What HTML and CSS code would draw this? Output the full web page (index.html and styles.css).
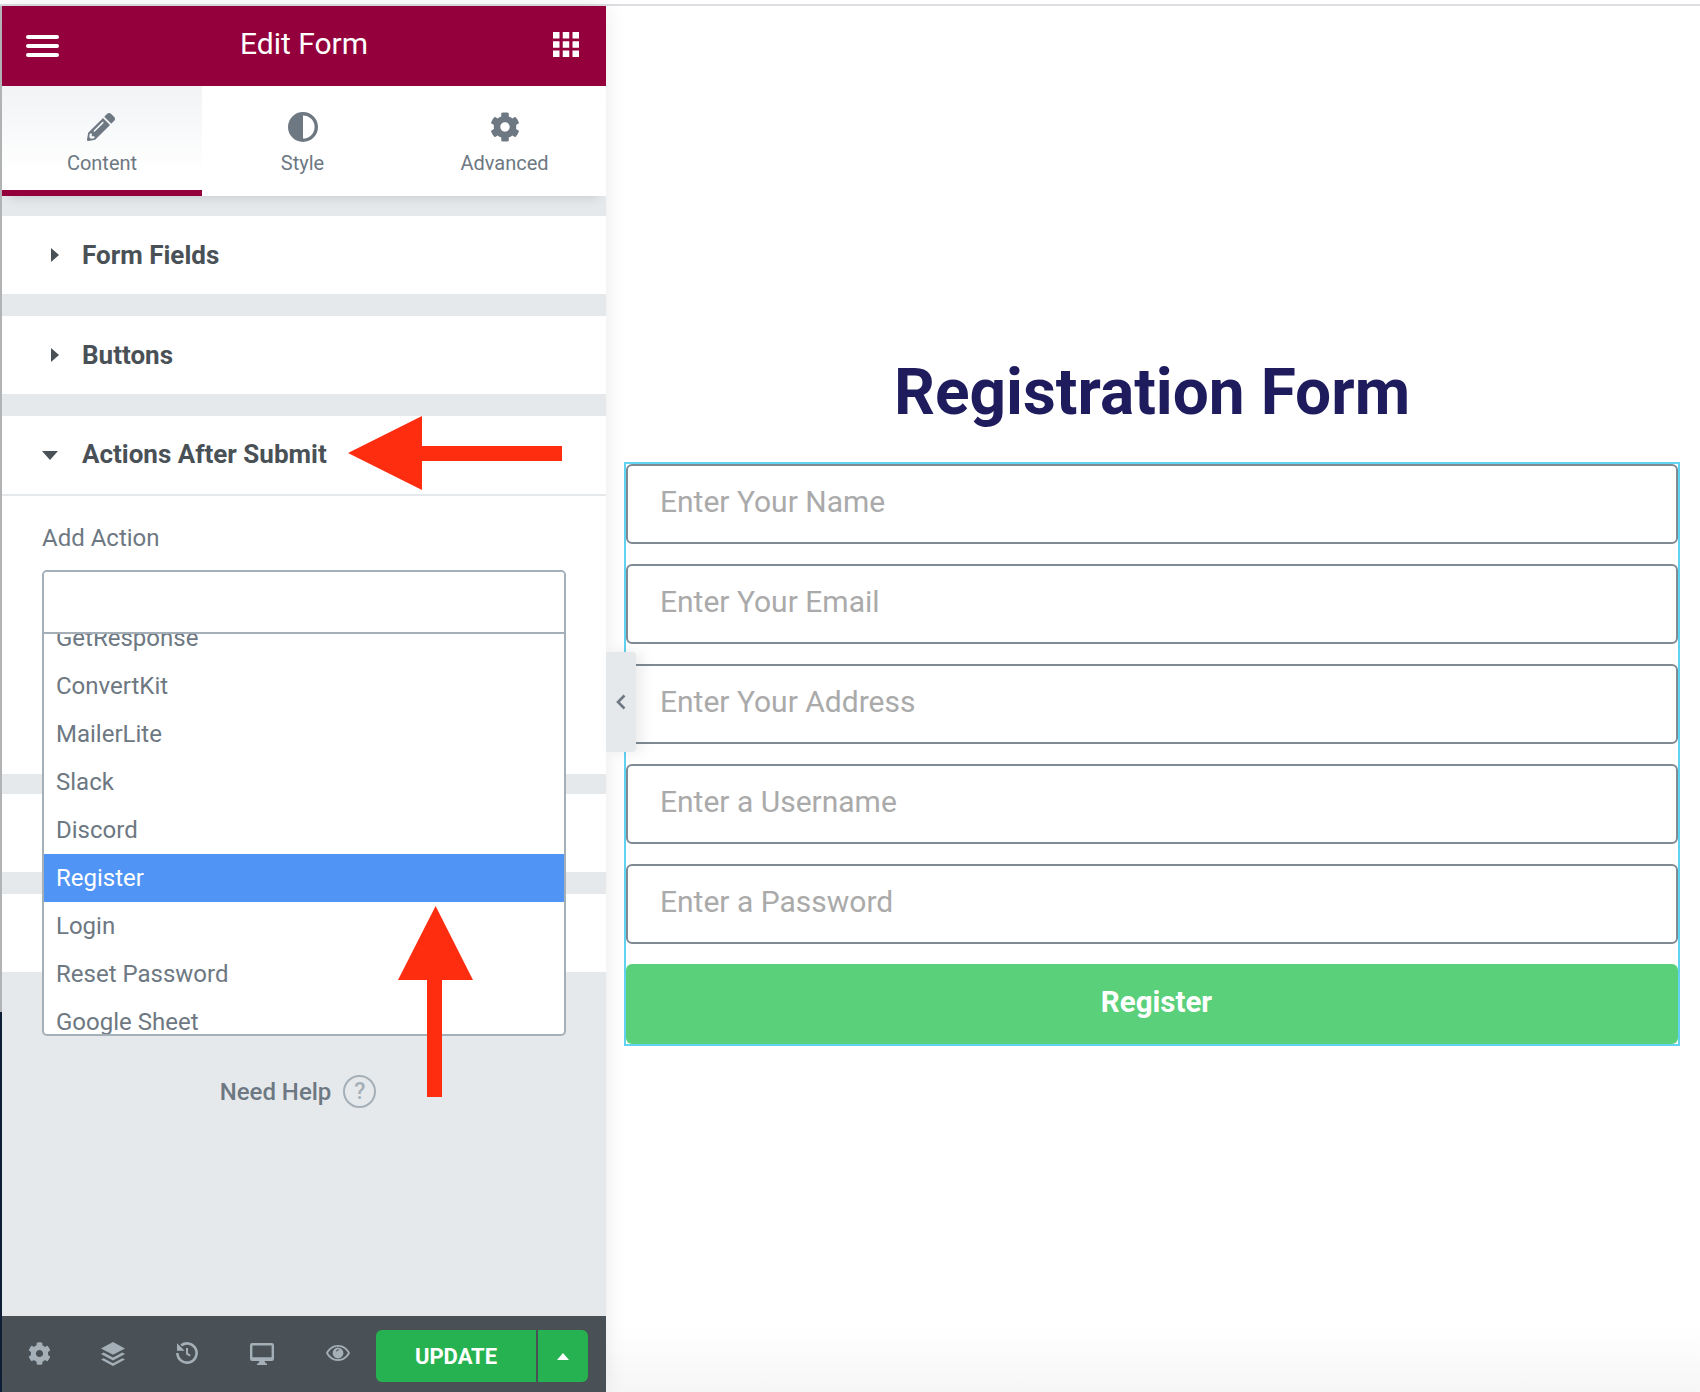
FILE: index.html
```html
<!DOCTYPE html>
<html lang="en">
<head>
<meta charset="utf-8">
<title>Edit Form</title>
<link rel="stylesheet" href="styles.css">
</head>
<body>
<div class="topline"></div>
<div class="app">
  <div class="rail"></div>
  <aside class="panel">
    <header class="panel-head">
      <svg class="ic-menu" viewBox="0 0 33 22"><rect y="0" width="33" height="4" rx="2"/><rect y="9" width="33" height="4" rx="2"/><rect y="18" width="33" height="4" rx="2"/></svg>
      <h1 class="panel-title">Edit Form</h1>
      <svg class="ic-grid" viewBox="0 0 26 25"><rect x="0" y="0" width="6.5" height="6.5"/><rect x="9.75" y="0" width="6.5" height="6.5"/><rect x="19.5" y="0" width="6.5" height="6.5"/><rect x="0" y="9.25" width="6.5" height="6.5"/><rect x="9.75" y="9.25" width="6.5" height="6.5"/><rect x="19.5" y="9.25" width="6.5" height="6.5"/><rect x="0" y="18.5" width="6.5" height="6.5"/><rect x="9.75" y="18.5" width="6.5" height="6.5"/><rect x="19.5" y="18.5" width="6.5" height="6.5"/></svg>
    </header>
    <nav class="tabs">
      <div class="tab tab-active">
        <svg class="tab-ic tab-pencil" viewBox="0 0 512 512"><path d="M497.9 142.1l-46.1 46.1c-4.7 4.7-12.3 4.7-17 0l-111-111c-4.7-4.7-4.7-12.3 0-17l46.1-46.1c18.7-18.7 49.1-18.7 67.9 0l60.1 60.1c18.8 18.7 18.8 49.1 0 67.9zM284.2 99.8L21.6 362.4.4 483.9c-2.9 16.4 11.4 30.6 27.8 27.8l121.5-21.3 262.6-262.6c4.7-4.7 4.7-12.3 0-17l-111-111c-4.8-4.7-12.4-4.7-17.1 0zM124.1 339.9c-5.5-5.500-5.500-14.300 0-19.800l154-154c5.500-5.500 14.300-5.500 19.800 0s5.500 14.300 0 19.800l-154 154c-5.500 5.500-14.300 5.500-19.800 0zM88 424h48v36.300l-64.500 11.300-31.100-31.100L51.700 376H88v48z"/></svg>
        <span>Content</span>
      </div>
      <div class="tab">
        <svg class="tab-ic" viewBox="0 0 30 30"><path fill-rule="evenodd" d="M15 0a15 15 0 1 0 0 30a15 15 0 0 0 0-30zM15 3.4a11.6 11.6 0 0 1 0 23.2z"/></svg>
        <span>Style</span>
      </div>
      <div class="tab">
        <svg class="tab-ic" viewBox="0 0 512 512"><path d="M487.4 315.7l-42.6-24.6c4.3-23.2 4.3-47 0-70.2l42.6-24.6c4.9-2.8 7.1-8.6 5.5-14-11.1-35.6-30-67.8-54.7-94.6-3.8-4.1-10-5.1-14.8-2.3L380.8 110c-17.9-15.4-38.5-27.3-60.8-35.1V25.8c0-5.6-3.9-10.5-9.4-11.7-36.7-8.2-74.3-7.8-109.2 0-5.5 1.2-9.4 6.1-9.4 11.7V75c-22.2 7.9-42.8 19.8-60.8 35.1L88.7 85.5c-4.9-2.8-11-1.9-14.8 2.3-24.7 26.7-43.6 58.9-54.7 94.6-1.7 5.4.6 11.2 5.5 14L67.3 221c-4.3 23.2-4.3 47 0 70.2l-42.6 24.6c-4.9 2.8-7.1 8.6-5.5 14 11.1 35.6 30 67.8 54.7 94.6 3.8 4.1 10 5.1 14.8 2.3l42.6-24.6c17.9 15.4 38.5 27.3 60.8 35.1v49.2c0 5.6 3.9 10.5 9.4 11.7 36.7 8.2 74.3 7.8 109.2 0 5.5-1.2 9.4-6.1 9.4-11.7v-49.2c22.2-7.9 42.8-19.8 60.8-35.1l42.6 24.6c4.9 2.8 11 1.9 14.8-2.3 24.7-26.7 43.6-58.9 54.7-94.6 1.5-5.5-.7-11.3-5.6-14.1zM256 336c-44.1 0-80-35.9-80-80s35.9-80 80-80 80 35.9 80 80-35.9 80-80 80z"/></svg>
        <span>Advanced</span>
      </div>
    </nav>
    <div class="sections">
      <section class="sec">
        <span class="caret-slot"><svg class="caret-r" viewBox="0 0 8 14"><path d="M0 0l8 7-8 7z"/></svg></span>
        <h2 class="sec-title">Form Fields</h2>
      </section>
      <section class="sec">
        <span class="caret-slot"><svg class="caret-r" viewBox="0 0 8 14"><path d="M0 0l8 7-8 7z"/></svg></span>
        <h2 class="sec-title">Buttons</h2>
      </section>
      <section class="sec sec-open">
        <span class="caret-slot"><svg class="caret-d" viewBox="0 0 16 9"><path d="M0 0h16l-8 9z"/></svg></span>
        <h2 class="sec-title">Actions After Submit</h2>
      </section>
      <div class="sec-body">
        <div class="field-label">Add Action</div>
        <div class="select">
          <div class="select-search"></div>
          <ul class="select-list">
            <li>GetResponse</li>
            <li>ConvertKit</li>
            <li>MailerLite</li>
            <li>Slack</li>
            <li>Discord</li>
            <li class="is-current">Register</li>
            <li>Login</li>
            <li>Reset Password</li>
            <li>Google Sheet</li>
          </ul>
        </div>
      </div>
      <section class="sec sec-after"></section>
      <section class="sec sec-after"></section>
      <div class="help">
        <span>Need Help</span>
        <span class="help-ic">?</span>
      </div>
    </div>
    <footer class="bar">
      <div class="bar-cell"><svg class="bar-gear" viewBox="0 0 512 512"><path d="M487.4 315.7l-42.6-24.6c4.3-23.2 4.3-47 0-70.2l42.6-24.6c4.9-2.8 7.1-8.6 5.5-14-11.1-35.6-30-67.8-54.7-94.6-3.8-4.1-10-5.1-14.8-2.3L380.8 110c-17.9-15.4-38.5-27.3-60.8-35.1V25.8c0-5.6-3.9-10.5-9.4-11.7-36.7-8.2-74.3-7.8-109.2 0-5.5 1.2-9.4 6.1-9.4 11.7V75c-22.2 7.9-42.8 19.8-60.8 35.1L88.7 85.5c-4.9-2.8-11-1.9-14.8 2.3-24.7 26.7-43.6 58.9-54.7 94.6-1.7 5.4.6 11.2 5.5 14L67.3 221c-4.3 23.2-4.3 47 0 70.2l-42.6 24.6c-4.9 2.8-7.1 8.6-5.5 14 11.1 35.6 30 67.8 54.7 94.6 3.8 4.1 10 5.1 14.8 2.3l42.6-24.6c17.9 15.4 38.5 27.3 60.8 35.1v49.2c0 5.6 3.9 10.5 9.4 11.7 36.7 8.2 74.3 7.8 109.2 0 5.5-1.2 9.4-6.1 9.4-11.7v-49.2c22.2-7.9 42.8-19.8 60.8-35.1l42.6 24.6c4.9 2.8 11 1.9 14.8-2.3 24.7-26.7 43.6-58.9 54.7-94.6 1.5-5.5-.7-11.3-5.6-14.1zM256 336c-44.1 0-80-35.9-80-80s35.9-80 80-80 80 35.9 80 80-35.9 80-80 80z"/></svg></div>
      <div class="bar-cell"><svg class="bar-layers" viewBox="0 0 24 24"><path d="M12 0l12 6.4-12 6.4L0 6.4z"/><path d="M2.6 10.6L12 15.6l9.4-5 2.6 1.5-12 6.4-12-6.4z"/><path d="M2.6 16.2L12 21.2l9.4-5L24 17.6 12 24 0 17.6z"/></svg></div>
      <div class="bar-cell"><svg class="bar-history" viewBox="0 0 22 22"><path fill="none" stroke="currentColor" stroke-width="2.6" d="M5.2 3.4A9.6 9.6 0 1 1 1.4 11"/><path d="M1 1.2v7.6h7.6z"/><path fill="none" stroke="currentColor" stroke-width="2" d="M11 6v5.6l3.2 2.2"/></svg></div>
      <div class="bar-cell"><svg class="bar-desktop" viewBox="0 0 24 22"><path fill-rule="evenodd" d="M2.2 0h19.6A2.2 2.2 0 0 1 24 2.2v13.6a2.2 2.2 0 0 1-2.2 2.2H2.2A2.2 2.2 0 0 1 0 15.800V2.200A2.200 2.200 0 0 1 2.200 0zM2.400 2.400v11.800h19.200V2.400z"/><path d="M9.500 18h5l1.300 2.600H17V22H7v-1.400h1.200z"/></svg></div>
      <div class="bar-cell"><svg class="bar-eye" viewBox="0 0 24 16"><path fill-rule="evenodd" d="M12 0c5.400 0 9.800 3.400 12 8-2.200 4.600-6.600 8-12 8S2.200 12.600 0 8c2.200-4.600 6.600-8 12-8zM12 1.800C7.800 1.800 4.200 4.300 2.100 8c2.100 3.700 5.700 6.200 9.900 6.200s7.800-2.500 9.900-6.200c-2.100-3.700-5.700-6.200-9.900-6.200z"/><path fill-rule="evenodd" d="M12 2.600a5.400 5.400 0 1 1 0 10.800a5.400 5.400 0 0 1 0-10.800zM12.600 4.200a2.600 2.600 0 0 0-2.600 2.600l3.600-2.400z"/></svg></div>
      <div class="update">
        <button class="update-main">UPDATE</button>
        <button class="update-more"><svg class="caret-up" viewBox="0 0 12 7"><path d="M6 0l6 7H0z"/></svg></button>
      </div>
    </footer>
    <div class="collapse"><svg class="chev" viewBox="0 0 10 16"><path d="M8.500 1.500L2 8l6.500 6.500" fill="none" stroke="currentColor" stroke-width="2.600"/></svg></div>
  </aside>
  <main class="canvas">
    <h2 class="form-title">Registration Form</h2>
    <form class="form">
      <div class="input">Enter Your Name</div>
      <div class="input">Enter Your Email</div>
      <div class="input">Enter Your Address</div>
      <div class="input">Enter a Username</div>
      <div class="input">Enter a Password</div>
      <div class="submit">Register</div>
    </form>
  </main>
</div>
<svg class="arrows" viewBox="0 0 1700 1392">
  <path d="M348 453L422 416V446H562V461H422V490z"/>
  <path d="M435.600 906L473 980H442V1097H427V980H398z"/>
</svg>
</body>
</html>
```

FILE: styles.css
```css
* { box-sizing: border-box; }
html, body { margin: 0; padding: 0; }
body {
  width: 1700px;
  height: 1392px;
  overflow: hidden;
  position: relative;
  background: #fff;
  font-family: Roboto, "Liberation Sans", sans-serif;
  display: flex;
  flex-direction: column;
}
.topline { height: 6px; flex: none; background: linear-gradient(#fff 0, #fff 4px, #dcdee1 4px); }
.app { flex: 1; display: flex; min-height: 0; }
.rail { width: 2px; flex: none; background: linear-gradient(#b9bbbd 0, #b9bbbd 1006px, #0e2038 1006px); }

/* Panel */
.panel {
  width: 604px;
  flex: none;
  position: relative;
  z-index: 2;
  background: #e6e9ec;
  display: flex;
  flex-direction: column;
  box-shadow: 0 0 20px rgba(0, 0, 0, .09);
}
.panel-head {
  height: 80px;
  flex: none;
  background: #93003c;
  color: #fff;
  display: flex;
  align-items: center;
  justify-content: space-between;
  padding: 0 27px 0 24px;
  fill: #fff;
}
.ic-menu { width: 33px; height: 22px; }
.ic-grid { width: 26px; height: 25px; margin-top: -3px; }
.panel-title { margin: 0; font-size: 30px; font-weight: 400; line-height: 1; position: relative; top: -2px; left: -2px; }

.tabs {
  height: 110px;
  flex: none;
  display: grid;
  grid-template-columns: 200px 201px 203px;
  background: #fff;
  box-shadow: 0 10px 10px -8px rgba(0, 0, 0, .12);
  position: relative;
}
.tab {
  display: flex;
  flex-direction: column;
  align-items: center;
  padding-top: 26px;
  color: #6d7882;
  fill: #6d7882;
  font-size: 20px;
  line-height: 24px;
  border-bottom: 6px solid transparent;
}
.tab-active {
  background: linear-gradient(#f1f3f5, #fff 85%);
  border-bottom-color: #93003c;
}
.tab-ic { width: 30px; height: 30px; margin-bottom: 9px; }
.tab-pencil { padding: 1px; position: relative; left: -1px; }

/* Sections */
.sections { flex: 1; display: flex; flex-direction: column; padding-top: 20px; min-height: 0; }
.sec {
  height: 78px;
  flex: none;
  background: #fff;
  display: flex;
  align-items: center;
  margin-bottom: 22px;
  color: #495157;
  fill: #495157;
}
.caret-slot { width: 80px; padding-left: 40px; flex: none; display: flex; align-items: center; }
.caret-r { width: 8px; height: 14px; margin-left: 9px; }
.caret-d { width: 16px; height: 9px; }
.sec-title { margin: 0; font-size: 26px; font-weight: 700; line-height: 1; }
.sec-open { margin-bottom: 0; height: 80px; border-bottom: 2px solid #e6e9ec; }
.sec-open .sec-title { position: relative; top: -1px; }
.sec-body { height: 278px; flex: none; background: #fff; position: relative; margin-bottom: 20px; padding: 28px 40px 0; }
.sec-after { background: #fff; }
.field-label { font-size: 24px; line-height: 28px; color: #6d7882; }

.select {
  position: absolute;
  left: 40px;
  top: 74px;
  width: 524px;
  height: 466px;
  background: #fff;
  border: 2px solid #a4afb7;
  border-radius: 5px;
  overflow: hidden;
  z-index: 3;
}
.select-search { height: 62px; border-bottom: 2px solid #a4afb7; position: relative; z-index: 1; background: #fff; }
.select-list {
  list-style: none;
  margin: -20px 0 0;
  padding: 0;
  font-size: 24px;
  color: #6d7882;
}
.select-list li { height: 48px; line-height: 48px; padding-left: 12px; }
.select-list .is-current { background: #5095f5; color: #fff; }

.help {
  margin-top: 81px;
  padding-right: 12px;
  display: flex;
  justify-content: center;
  align-items: center;
  gap: 12px;
  font-size: 24px;
  font-weight: 500;
  color: #6d7882;
}
.help-ic {
  width: 33px;
  height: 33px;
  border: 2px solid #a4afb7;
  border-radius: 50%;
  color: #a4afb7;
  display: flex;
  align-items: center;
  justify-content: center;
  font-size: 23px;
}

/* Bottom bar */
.bar {
  height: 76px;
  flex: none;
  background: #495157;
  display: flex;
  align-items: center;
  fill: #a4afb7;
  color: #a4afb7;
  position: relative;
  z-index: 1;
}
.bar-cell { width: 74.5px; height: 24px; display: flex; align-items: center; justify-content: center; position: relative; top: -1px; }
.bar-gear { width: 23px; height: 23px; }
.bar-layers { width: 24px; height: 24px; margin: 2px 1px 0 0; }
.bar-history { width: 22px; height: 22px; margin-right: 2px; }
.bar-desktop { width: 24px; height: 22px; margin: 2px 2px 0 0; }
.bar-eye { width: 24px; height: 16px; margin: 0 0 0 2px; }
.update { margin-left: 1.5px; display: flex; height: 52px; gap: 2px; position: relative; top: 2px; }
.update-main, .update-more {
  border: 0;
  padding: 0;
  background: #27b251;
  color: #fff;
  font: 700 22px Roboto, sans-serif;
  display: flex;
  align-items: center;
  justify-content: center;
}
.update-main { width: 160px; border-radius: 6px 0 0 6px; }
.update-more { width: 50px; border-radius: 0 6px 6px 0; fill: #fff; }
.caret-up { width: 12px; height: 7px; }

.collapse {
  position: absolute;
  left: 100%;
  top: 646px;
  width: 30px;
  height: 100px;
  background: #e6e9ec;
  color: #6d7882;
  display: flex;
  align-items: center;
  justify-content: center;
  border-radius: 0 4px 4px 0;
  box-shadow: 6px 0 14px rgba(0, 0, 0, .08);
}
.chev { width: 10px; height: 16px; margin-right: 1px; }

/* Canvas */
.canvas {
  flex: 1;
  padding: 0 20px 0 18px;
  background: linear-gradient(#fff 0, #fff 1320px, #f6f6f6 100%);
}
.form-title {
  margin: 0;
  padding-top: 349px;
  height: 456px;
  text-align: center;
  font-size: 64px;
  line-height: 76px;
  font-weight: 700;
  color: #1f1c5e;
}
.form {
  width: 1056px;
  border: 2px solid #61d2f0;
  display: flex;
  flex-direction: column;
  gap: 20px;
}
.input {
  height: 80px;
  border: 2px solid #7f8a93;
  border-radius: 6px;
  padding: 0 0 6px 32px;
  display: flex;
  align-items: center;
  font-size: 30px;
  color: #aaa;
  background: #fff;
}
.submit {
  height: 80px;
  border-radius: 6px;
  background: #5ad07a;
  color: #fff;
  font-size: 29.5px;
  font-weight: 700;
  display: flex;
  align-items: center;
  justify-content: center;
  padding: 0 0 4px 9px;
}

.arrows {
  position: absolute;
  left: 0;
  top: 0;
  width: 1700px;
  height: 1392px;
  z-index: 10;
  fill: #ff2d10;
  pointer-events: none;
}
```
